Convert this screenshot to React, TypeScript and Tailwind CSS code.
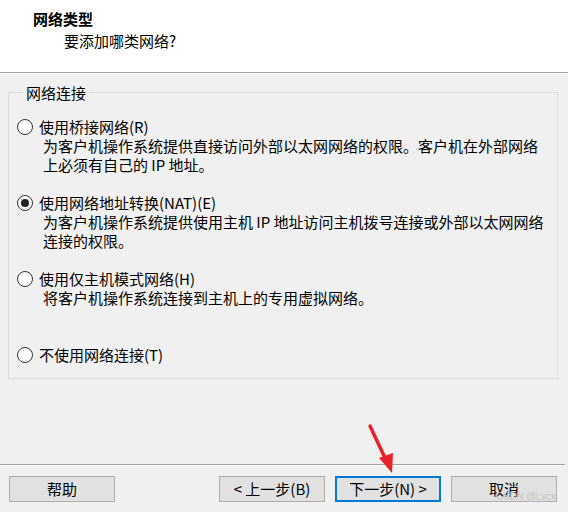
const options = [
  {
    label: '使用桥接网络(R)',
    desc: ['为客户机操作系统提供直接访问外部以太网网络的权限。客户机在外部网络', '上必须有自己的 IP 地址。'],
    checked: false,
  },
  {
    label: '使用网络地址转换(NAT)(E)',
    desc: ['为客户机操作系统提供使用主机 IP 地址访问主机拨号连接或外部以太网网络', '连接的权限。'],
    checked: true,
  },
  {
    label: '使用仅主机模式网络(H)',
    desc: ['将客户机操作系统连接到主机上的专用虚拟网络。'],
    checked: false,
  },
  {
    label: '不使用网络连接(T)',
    desc: [],
    checked: false,
  },
]

function Radio({ checked }: { checked: boolean }) {
  return (
    <span className="w-[16px] h-[16px] rounded-full border border-[#333] bg-white flex items-center justify-center shrink-0">
      {checked && <span className="w-[8px] h-[8px] rounded-full bg-[#222]" />}
    </span>
  )
}

function Button({ text, primary }: { text: string; primary?: boolean }) {
  return (
    <button
      className={
        primary
          ? 'w-[106px] h-[26px] bg-[#e1e1e1] border-2 border-[#0078d7] text-[15px] leading-[20px] text-black'
          : 'w-[106px] h-[26px] bg-[#e1e1e1] border border-[#adadad] text-[15px] leading-[20px] text-black'
      }
    >
      {text}
    </button>
  )
}

export default function App() {
  return (
    <div className="relative w-[568px] h-[512px] overflow-hidden bg-[#f0f0f0] flex flex-col font-['Noto_Sans_CJK_SC','Noto_Sans',sans-serif] text-black">
      {/* header */}
      <div className="h-[72px] bg-white pt-[8px] pl-[33px] shrink-0">
        <div className="text-[15px] leading-[22px] font-bold">网络类型</div>
        <div className="text-[15px] leading-[22px] pl-[31px]">要添加哪类网络?</div>
      </div>
      <div className="h-px bg-[#a0a0a0] shrink-0" />
      <div className="h-px bg-white shrink-0" />

      {/* group */}
      <fieldset className="mx-[8px] mr-[10px] mt-[9px] border border-[#dcdcdc] pl-[8px] pb-[14px]">
        <legend className="ml-[6px] px-[3px] text-[15px] leading-[19px]">网络连接</legend>
        <div className="pt-[15px] flex flex-col">
          {options.map((o) => (
            <div key={o.label} className="h-[76px] last:h-[19px] flex flex-col">
              <div className="flex items-center gap-[6px] h-[19px]">
                <Radio checked={o.checked} />
                <span className="text-[15px] leading-[19px] whitespace-nowrap">{o.label}</span>
              </div>
              {o.desc.map((d) => (
                <div key={d} className="pl-[26px] text-[15px] leading-[19px] whitespace-nowrap">
                  {d}
                </div>
              ))}
            </div>
          ))}
        </div>
      </fieldset>

      <div className="flex-1" />

      {/* footer */}
      <div className="h-px bg-[#a0a0a0] mr-[3px] shrink-0" />
      <div className="h-px bg-white mr-[3px] shrink-0" />
      <div className="h-[46px] pt-[10px] px-[9px] flex items-start shrink-0">
        <Button text="帮助" />
        <div className="flex-1" />
        <div className="flex gap-[10px] pr-[2px]">
          <Button text="< 上一步(B)" />
          <Button text="下一步(N) >" primary />
          <Button text="取消" />
        </div>
      </div>

      {/* annotation arrow */}
      <svg className="absolute left-0 top-0 pointer-events-none" width="568" height="512">
        <line x1="370" y1="426" x2="386" y2="460" stroke="#e8222a" strokeWidth="3.5" strokeLinecap="round" />
        <polygon points="392,473 379,458 393,453" fill="#e8222a" />
      </svg>

      <span className="absolute left-[496px] top-[491px] whitespace-nowrap text-[10px] leading-[12px] tracking-[-0.2px] text-[#c4c4c4] font-['Liberation_Sans',sans-serif]">
        CSDN @Lycx
      </span>
    </div>
  )
}
